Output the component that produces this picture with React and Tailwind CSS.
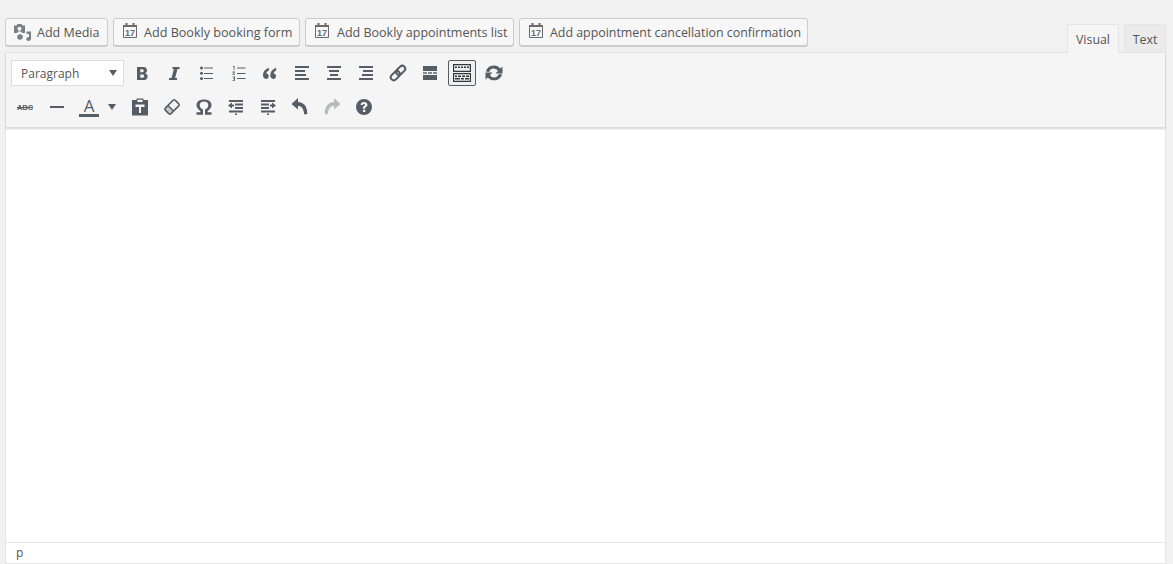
const ink = "#555d66";

const Svg = ({ children, size = 20, className = "" }) => (
  <svg width={size} height={size} viewBox="0 0 20 20" className={className} fill={ink}>
    {children}
  </svg>
);

const CalendarIcon = () => (
  <svg width="14" height="15" viewBox="0 0 14 15" className="shrink-0">
    <path fill="none" stroke="#6b6b6b" strokeWidth="1" d="M.5 2.500h13v12H.5z" />
    <path fill="#6b6b6b" d="M0 2h14v2H0zM2.500 0h2v3h-2zM9.500 0h2v3h-2z" />
    <text x="7" y="13" textAnchor="middle" fontSize="9" fontWeight="700" fill="#6b6b6b" fontFamily="Liberation Sans, sans-serif">17</text>
  </svg>
);

const MediaIcon = () => (
  <svg width="17" height="17" viewBox="0 0 17 17" fill="#7a7f84">
    <path fillRule="evenodd" d="M0 1.500h2.500L3.500 0h4l1 1.500H11V9H8c-.3-1-1.200-1.700-2.300-1.700S3.700 8 3.400 9H0zM5.500 2.700a2 2 0 1 0 0 4 2 2 0 0 0 0-4z" />
    <circle cx="6" cy="13" r="2.800" />
    <path d="M12.500 7.500H17v7c0 1.400-1 2.500-2.400 2.500-1.300 0-2.300-.9-2.300-2 0-1.200 1.100-2 2.700-2V10h-2.500z" />
  </svg>
);

const MediaButton = ({ icon, label, className }) => (
  <button className={`flex h-7 items-center rounded-[3px] border border-[#cccccc] bg-[#f7f7f7] pl-[9px] leading-none text-[#555555] shadow-[0_1px_0_#cccccc] ${className}`}>
    {icon}
    <span className="whitespace-nowrap pt-[2px]">{label}</span>
  </button>
);

const ToolButton = ({ children, active = false, className = "w-7" }) => (
  <div
    className={`flex h-[26px] items-center justify-center rounded-[2px] ${className} ${
      active ? "border border-[#555d66] bg-[#f0f0f0]" : ""
    }`}
  >
    {children}
  </div>
);

const bars = (rows) => rows.map(([x, y, w, h = 2], i) => <rect key={i} x={x} y={y} width={w} height={h} />);

const Icons = {
  bold: (
    <Svg>
      <path transform="translate(.5 1)" fillRule="evenodd" d="M4.500 3h6.200c2.400 0 3.800 1.200 3.800 3.300 0 1.400-.7 2.400-1.900 2.900 1.600.4 2.500 1.600 2.500 3.200 0 2.400-1.600 3.600-4.300 3.600H4.500zm3.300 2.300v3h1.900c1 0 1.500-.5 1.500-1.500s-.5-1.500-1.500-1.500zm0 5.200v3.300h2.200c1.100 0 1.700-.6 1.700-1.700s-.6-1.600-1.700-1.600z" />
    </Svg>
  ),
  italic: (
    <Svg>
      <path d="M8.500 4h7v2h-2l-2.400 9h1.900v2H5v-2h2.500L9.900 6H8.500z" />
    </Svg>
  ),
  ul: (
    <Svg>
      <circle cx="5.500" cy="5" r="1.500" />
      <circle cx="5.500" cy="10.300" r="1.500" />
      <circle cx="5.500" cy="15.500" r="1.500" />
      {bars([[8, 4.500, 9, 1], [8, 10, 9, 1], [8, 15, 9, 1]])}
    </Svg>
  ),
  ol: (
    <Svg>
      {bars([[9, 4.500, 8.500, 1], [9, 10, 8.500, 1], [9, 15, 8.500, 1]])}
      <path d="M5 3h1.500v4H5.700V4H5zM4.500 8.500h2.400v1L5.500 11h1.500v.8H4.500V11L6 9.500H4.500zM4.500 13.500H7v4.300H4.500V17h1.700v-1H5v-.7h1.200v-1H4.500z" />
    </Svg>
  ),
  quote: (
    <Svg>
      <path transform="translate(1.300 1.700) scale(.86)" d="M8.800 3.500C5 4.800 2 8 2 12.300 2 14.700 3.300 16.500 5.400 16.500c1.900 0 3.200-1.300 3.200-3.200 0-1.800-1.200-3-2.800-3 .3-1.500 1.300-2.600 3-3.500zM17.300 3.500c-3.800 1.300-6.800 4.500-6.800 8.800 0 2.400 1.300 4.200 3.400 4.200 1.900 0 3.200-1.300 3.200-3.200 0-1.800-1.200-3-2.800-3 .3-1.500 1.300-2.600 3-3.500z" />
    </Svg>
  ),
  left: (
    <Svg>
      {bars([[3, 3, 14], [3, 7, 10], [3, 11, 11], [3, 15, 14]])}
    </Svg>
  ),
  center: (
    <Svg>
      {bars([[3, 3, 14], [5, 7, 10], [6, 11, 8], [3, 15, 14]])}
    </Svg>
  ),
  right: (
    <Svg>
      {bars([[3, 3, 14], [7, 7, 10], [6, 11, 11], [3, 15, 14]])}
    </Svg>
  ),
  link: (
    <Svg>
      <g fill="none" stroke={ink} strokeWidth="2" transform="rotate(-45 10 10)">
        <rect x="1" y="7" width="10.500" height="6" rx="3" />
        <rect x="8.500" y="7" width="10.500" height="6" rx="3" />
      </g>
    </Svg>
  ),
  more: (
    <Svg>
      {bars([[3, 3, 14, 5], [3, 12, 14, 5], [3, 9.300, 4, 1.400], [8, 9.300, 4, 1.400], [13, 9.300, 4, 1.400]])}
    </Svg>
  ),
  kitchen: (
    <svg width="20" height="20" viewBox="0 0 20 20" fill="#32373c">
      <path fillRule="evenodd" d="M1 1h18v8H1zm1.200 1.200v5.600h15.600V2.200zM1 10h18v9H1zm1.200 1.200v6.600h15.600v-6.600z" />
      {bars([[3, 3.500, 2, 1.500], [6, 3.500, 2, 1.500], [9, 3.500, 2, 1.500], [12, 3.500, 2, 1.500], [15, 3.500, 2, 1.500], [3, 12.500, 2, 1.500], [6, 12.500, 3, 1.500], [10, 12.500, 3, 1.500], [14, 12.500, 3, 1.500], [3, 15, 5, 1.500], [9, 15, 3, 1.500], [13, 15, 4, 1.500]])}
    </svg>
  ),
  refresh: (
    <Svg>
      <path d="M10.200 2.500c2.500 0 4.600 1.200 6 3.100L18.500 3.500v7h-7l2.500-2.500a4.800 4.800 0 0 0-8.800.9L1.800 8.500a8.500 8.500 0 0 1 8.400-6zM1.500 16.500v-7h7l-2.500 2.500a4.800 4.800 0 0 0 8.800-.9l3.400.4a8.500 8.500 0 0 1-14.400 3z" />
    </Svg>
  ),
  strike: (
    <Svg>
      <text x="10" y="13" textAnchor="middle" fontSize="7.500" fontWeight="700" fill={ink} fontFamily="Liberation Sans, sans-serif">ABC</text>
      <rect x="2" y="10" width="16" height="1" />
    </Svg>
  ),
  hr: (
    <Svg>
      <rect x="3" y="9" width="14" height="2" />
    </Svg>
  ),
  paste: (
    <Svg>
      <path fillRule="evenodd" d="M2 3h4.500V1.500h7V3H18v15.500H2zm5.500-.2V5h5V2.800zM5.500 7.500V10H9v6h2v-6h3.500V7.500z" />
    </Svg>
  ),
  eraser: (
    <Svg>
      <g transform="rotate(-45 10 10)">
        <rect x="3" y="6" width="14" height="8" rx="1.500" fill="#f5f5f5" stroke={ink} strokeWidth="1.600" />
        <path d="M3 7.500A1.500 1.500 0 0 1 4.500 6h3.500v8H4.500A1.500 1.500 0 0 1 3 12.500z" fill={ink} opacity="0.300" />
        <rect x="7.500" y="6" width="1.500" height="8" />
      </g>
    </Svg>
  ),
  omega: (
    <Svg>
      <path d="M2.500 15.200h3.800v-1.500C4 12.600 2.500 10.500 2.500 8c0-3.300 3-5.500 7.500-5.500S17.500 4.700 17.500 8c0 2.500-1.500 4.600-3.800 5.700v1.500h3.800v2.500h-6.500v-5.200c2-.5 3.300-2.300 3.300-4.400 0-2.200-1.700-3.500-4.300-3.500S5.700 5.900 5.700 8.100c0 2.100 1.300 3.900 3.300 4.400v5.200H2.500z" />
    </Svg>
  ),
  outdent: (
    <Svg>
      {bars([[3, 3, 14], [9, 6.500, 8], [9, 10, 8], [3, 13.500, 14], [9, 16.500, 2, 1.500]])}
      <path d="M2 8.500l4-3v2h2v2H6v2z" />
    </Svg>
  ),
  indent: (
    <Svg>
      {bars([[3, 3, 14], [3, 6.500, 8], [3, 10, 8], [3, 13.500, 14], [9, 16.500, 2, 1.500]])}
      <path d="M18 8.500l-4-3v2h-2v2h2v2z" />
    </Svg>
  ),
  help: (
    <Svg>
      <path fillRule="evenodd" d="M10 2a8 8 0 1 1 0 16 8 8 0 0 1 0-16zM9 12.700v2.300h2.300v-2.300zM10 5c-2 0-3.300 1-3.400 3h2.200c.1-.8.500-1.100 1.200-1.100.6 0 1 .3 1 .9 0 .5-.3.800-.9 1.200-1.100.7-1.300 1.300-1.200 2.700h2.200c0-.8.100-1.100.9-1.600 1-.6 1.400-1.400 1.400-2.400C13.400 6 12.100 5 10 5z" />
    </Svg>
  ),
};

const ArrowIcon = ({ color, flip = false }) => (
  <svg width="20" height="20" viewBox="0 0 20 20" className={flip ? "-scale-x-100" : ""}>
    <path fill={color} d="M8 1L1.500 7l6.500 5.500V9c3.500 0 5.800 2.500 6.300 8.500l3-.5C17.300 9.500 14 5.300 8 5z" />
  </svg>
);

const Caret = () => <div className="h-0 w-0 border-x-[4px] border-t-[6px] border-x-transparent border-t-[#555d66]" />;

export default function App() {
  const row1 = ["bold", "italic", "ul", "ol", "quote", "left", "center", "right", "link", "more", "kitchen", "refresh"];
  const row2 = ["paste", "eraser", "omega", "outdent", "indent"];

  return (
    <div className="h-[564px] w-[1173px] overflow-hidden bg-[#f1f1f1] pl-[5px] pr-[7px] pt-[18px] font-['Open_Sans',sans-serif]">
      <div className="flex h-[34px] items-start">
        <div className="flex gap-[5px]">
          <MediaButton className="w-[103px] text-[12.5px]" icon={<span className="-ml-px mr-[6px] flex w-[17px]"><MediaIcon /></span>} label="Add Media" />
          <MediaButton className="w-[187px] text-[12.6px]" icon={<span className="mb-[3px] mr-[7px] flex"><CalendarIcon /></span>} label="Add Bookly booking form" />
          <MediaButton className="w-[209px] text-[12.5px]" icon={<span className="mb-[3px] mr-[8px] flex"><CalendarIcon /></span>} label="Add Bookly appointments list" />
          <MediaButton className="w-[289px] text-[12.4px]" icon={<span className="mb-[3px] mr-[7px] flex"><CalendarIcon /></span>} label="Add appointment cancellation confirmation" />
        </div>
        <div className="relative z-10 ml-auto mt-[6px] flex items-start gap-[5px] pr-0 text-[12.4px] leading-none">
          <div className="flex h-[29px] w-[52px] items-center justify-center border border-b-0 border-[#e5e5e5] bg-[#f5f5f5] pt-[3px] text-[#555555]">Visual</div>
          <div className="flex h-[28px] w-[42px] items-center justify-center border border-b-0 border-[#e5e5e5] bg-[#ebebeb] pt-[3px] text-[#555555]">Text</div>
        </div>
      </div>

      <div className="flex h-[512px] flex-col border border-[#e5e5e5] bg-white">
        <div className="relative flex h-[75px] flex-col gap-2 border-b border-[#dddddd] bg-[#f5f5f5] pl-[5px] pt-[7px] shadow-[0_1px_2px_rgba(0,0,0,0.18)]">
          <div className="flex items-center gap-1">
            <div className="flex h-[26px] w-[113px] items-center justify-between border border-[#dddddd] bg-white pl-[9px] pr-[6px] text-[12px] leading-none text-[#555555]">
              <span className="pt-px">Paragraph</span>
              <Caret />
            </div>
            {row1.map((name) => (
              <ToolButton key={name} active={name === "kitchen"}>
                {Icons[name]}
              </ToolButton>
            ))}
          </div>
          <div className="flex items-center gap-1">
            <ToolButton>{Icons.strike}</ToolButton>
            <ToolButton>{Icons.hr}</ToolButton>
            <div className="flex items-center">
              <ToolButton>
                <div className="flex flex-col items-center">
                  <span className="text-[17px] leading-[17px] text-[#555d66]">A</span>
                  <div className="h-[3px] w-5 bg-[#555d66]" />
                </div>
              </ToolButton>
              <ToolButton className="w-[19px] pr-[2px]">
                <Caret />
              </ToolButton>
            </div>
            {row2.map((name) => (
              <ToolButton key={name}>{Icons[name]}</ToolButton>
            ))}
            <ToolButton><ArrowIcon color={ink} /></ToolButton>
            <ToolButton><ArrowIcon color="#b9bcbf" flip /></ToolButton>
            <ToolButton>{Icons.help}</ToolButton>
          </div>
        </div>
        <div className="flex-1 bg-white" />
        <div className="flex h-[21px] items-center border-t border-[#e5e5e5] bg-white pl-[10px] text-[12px] leading-none text-[#555555]">p</div>
      </div>
    </div>
  );
}
